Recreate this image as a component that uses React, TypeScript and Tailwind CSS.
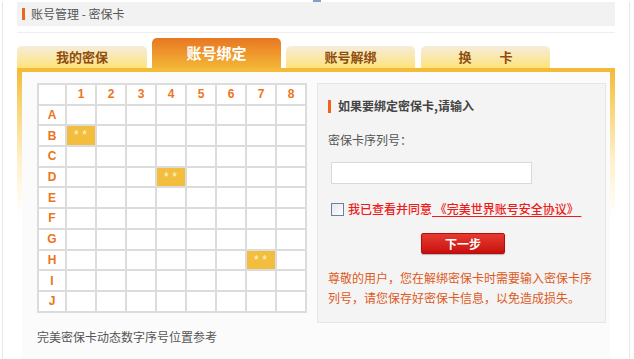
import React from 'react';

const cols = ['1', '2', '3', '4', '5', '6', '7', '8'];
const rows = ['A', 'B', 'C', 'D', 'E', 'F', 'G', 'H', 'I', 'J'];
const marked: Record<string, boolean> = { B1: true, D4: true, H7: true };

const cn = "font-['Noto_Sans_CJK_SC',sans-serif]";

function Tab({ label, active, w }: { label: React.ReactNode; active?: boolean; w: string }) {
  if (active) {
    return (
      <div className={`${w} h-[30px] rounded-t-[5px] bg-gradient-to-b from-[#e87622] to-[#f2b537] flex items-center justify-center text-white text-[15px] font-bold ${cn}`}>
        {label}
      </div>
    );
  }
  return (
    <div className={`${w} h-[22px] rounded-t-[5px] bg-gradient-to-b from-[#f6ecda] to-[#fde377] flex items-center justify-center text-[#8f4d10] text-[13px] font-bold ${cn}`}>
      {label}
    </div>
  );
}

function CardGrid() {
  return (
    <div className="grid grid-cols-[26px_repeat(8,28px)] auto-rows-[18.7px] gap-[2px] p-[2px] bg-[#dcdcdc] w-max">
      <div className="bg-white" />
      {cols.map((c) => (
        <div key={c} className="bg-white flex items-center justify-center text-[#ec7520] text-[12px] font-bold font-['Liberation_Sans',sans-serif]">
          {c}
        </div>
      ))}
      {rows.map((r) => (
        <React.Fragment key={r}>
          <div className="bg-white flex items-center justify-center text-[#ec7520] text-[12px] font-bold font-['Liberation_Sans',sans-serif]">
            {r}
          </div>
          {cols.map((c) =>
            marked[r + c] ? (
              <div key={c} className="bg-[#f3bd3e] flex justify-center pt-[4px] text-[#fff6dc] text-[12px] leading-none font-['Liberation_Mono',monospace] tracking-[1px]">
                **
              </div>
            ) : (
              <div key={c} className="bg-white" />
            )
          )}
        </React.Fragment>
      ))}
    </div>
  );
}

export default function App() {
  return (
    <div className={`relative w-[634px] h-[359px] bg-white overflow-hidden pl-[2px] ${cn}`}>
      <div className="absolute left-[313px] top-0 w-[8px] h-[2px] bg-[#7f9fc8]" />
      <div className="w-[628px] h-full border-l border-r border-[#e6e6e6] px-[14px]">
        {/* title bar */}
        <div className="mt-[2px] h-[24px] bg-[#f2f2f2] flex items-center">
          <div className="ml-[5px] w-[3px] h-[12px] bg-[#f0641c]" />
          <span className="ml-[6px] text-[12px] text-[#555]">账号管理 - 密保卡</span>
        </div>
        <div className="mt-[6px] h-px bg-[#eeeeee]" />

        {/* tabs */}
        <div className="mt-[5px] h-[30px] flex items-end">
          <Tab w="w-[130px]" label="我的密保" />
          <div className="ml-[5px]">
            <Tab w="w-[129px]" active label="账号绑定" />
          </div>
          <div className="ml-[5px]">
            <Tab w="w-[129px]" label="账号解绑" />
          </div>
          <div className="ml-[6px]">
            <Tab
              w="w-[129px]"
              label={
                <span className="flex gap-[28px]">
                  <span>换</span>
                  <span>卡</span>
                </span>
              }
            />
          </div>
        </div>

        {/* frame */}
        <div className="h-[300px] pt-[4px] px-[5px] bg-[linear-gradient(to_bottom,#f4b936_0px,#f7cf66_30px,#fdf0c8_90px,#ffffff_150px)]">
          <div className="h-full bg-[#fbfbfb] pl-[15px] pt-[11px] flex gap-[10px]">
            <div>
              <CardGrid />
              <div className="mt-[15px] text-[12px] text-[#555]">完美密保卡动态数字序号位置参考</div>
            </div>

            <div className="w-[289px] h-[240px] border border-[#e6e6e6] bg-[#f4f4f4] pl-[10px]">
              <div className="mt-[15px] h-[14px] flex items-center">
                <div className="w-[3px] h-[13px] bg-[#f0641c]" />
                <span className="ml-[7px] text-[12px] font-bold text-[#444]">如果要绑定密保卡,请输入</span>
              </div>
              <div className="mt-[17px] leading-[20px] text-[12px] text-[#555]">密保卡序列号：</div>
              <div className="mt-[12px] ml-[3px] w-[201px] h-[22px] bg-white border border-[#d9d9d9]" />
              <div className="mt-[15px] h-[20px] ml-[3px] flex items-center">
                <div className="w-[13px] h-[13px] border border-[#6f8198] bg-gradient-to-br from-[#e4e7ec] to-[#ffffff]" />
                <span className="ml-[4px] text-[12px] font-medium text-[#ee1b1b] whitespace-nowrap">
                  我已查看并同意<span className="underline underline-offset-[2px]">&nbsp;《完美世界账号安全协议》&nbsp;</span>
                </span>
              </div>
              <div className="mt-[14px] ml-[93px] w-[84px] h-[21px] rounded-[2px] border border-[#b30f0f] bg-gradient-to-b from-[#e6392e] to-[#c80d0d] shadow-[0_1px_1px_rgba(0,0,0,0.25)] flex items-center justify-center text-white text-[12px] font-bold">
                下一步
              </div>
              <p className="mt-[14px] w-[270px] text-[12px] leading-[20px] text-[#dd5a1c]">
                尊敬的用户，您在解绑密保卡时需要输入密保卡序列号，请您保存好密保卡信息，以免造成损失。
              </p>
            </div>
          </div>
        </div>
      </div>
    </div>
  );
}
